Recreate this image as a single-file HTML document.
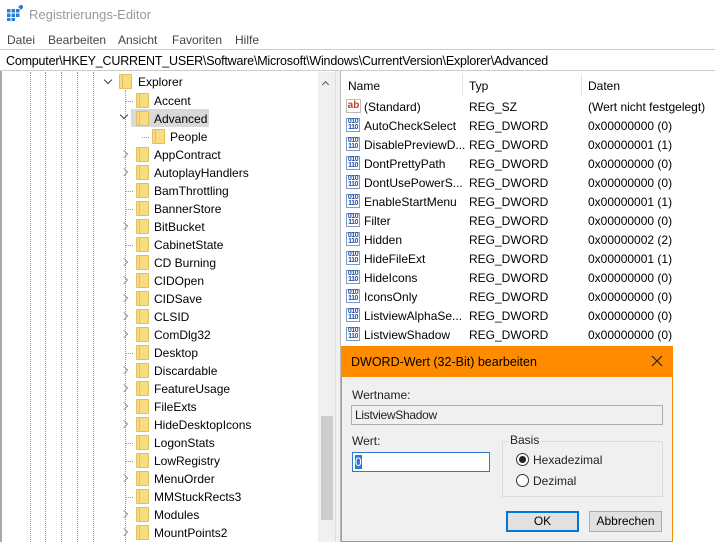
<!DOCTYPE html>
<html><head><meta charset="utf-8"><style>
*{margin:0;padding:0;box-sizing:border-box}
html,body{width:715px;height:542px;overflow:hidden}
body{background:#fff;font-family:"Liberation Sans",sans-serif;font-size:12px;color:#000;position:relative}
.a{position:absolute;white-space:nowrap}
.t{font-size:12px}
.fold{position:absolute;width:13px;height:15px;background:#f8dc82;border:1px solid #e3bf5a;border-radius:1px}
.fold:before{content:"";position:absolute;left:2px;top:-1px;width:1px;height:15px;background:#e3bf5a}
.chev{position:absolute;width:6px;height:6px;border-right:1.5px solid #999;border-bottom:1.5px solid #999;transform:rotate(-45deg)}
.dn{transform:rotate(45deg);border-color:#444}
.vl{position:absolute;top:72px;height:470px;border-left:1px dotted #999}
.hd{position:absolute;width:7px;border-top:1px dotted #999}
.ic{position:absolute;width:14px;height:14px;border:1px solid #7d9bc7;background:#fff;font-size:7px;line-height:6px;color:#1f4ea0;font-weight:bold;text-align:center;letter-spacing:-.5px}
</style></head><body>
<svg class="a" style="left:7px;top:5px" width="16" height="16"><g fill="#2a7fd4"><rect x="0" y="4" width="3.5" height="3.5"/><rect x="4.5" y="4" width="3.5" height="3.5"/><rect x="9" y="4" width="3.5" height="3.5"/><rect x="0" y="8.5" width="3.5" height="3.5"/><rect x="4.5" y="8.5" width="3.5" height="3.5"/><rect x="9" y="8.5" width="3.5" height="3.5"/><rect x="0" y="13" width="3.5" height="3"/><rect x="4.5" y="13" width="3.5" height="3"/></g><rect x="12" y="0" width="4" height="4" fill="#2a7fd4" transform="rotate(45 14 2)"/></svg>
<div class="a" style="left:29px;top:7px;font-size:13px;color:#999">Registrierungs-Editor</div>
<div class="a" style="left:7px;top:33px;color:#444">Datei</div>
<div class="a" style="left:48px;top:33px;color:#444">Bearbeiten</div>
<div class="a" style="left:118px;top:33px;color:#444">Ansicht</div>
<div class="a" style="left:172px;top:33px;color:#444">Favoriten</div>
<div class="a" style="left:235px;top:33px;color:#444">Hilfe</div>
<div class="a" style="left:0;top:49px;width:715px;height:22px;border-top:1px solid #ccc;border-bottom:1px solid #ccc"></div>
<div class="a" style="left:6px;top:54px;font-size:12.5px;letter-spacing:-.2px">Computer\HKEY_CURRENT_USER\Software\Microsoft\Windows\CurrentVersion\Explorer\Advanced</div>
<div class="a" style="left:0;top:71px;width:2px;height:471px;background:#aaa"></div>
<div class="vl" style="left:30px"></div><div class="vl" style="left:45px"></div><div class="vl" style="left:61px"></div><div class="vl" style="left:77px"></div><div class="vl" style="left:93px"></div><div class="vl" style="left:125px;top:90px"></div>
<div class="a" style="left:318px;top:72px;width:17px;height:470px;background:#f0f0f0"></div>
<div class="a" style="left:321px;top:416px;width:12px;height:104px;background:#cdcdcd"></div>
<div class="chev" style="left:323px;top:82px;transform:rotate(-135deg);border-color:#555;width:5px;height:5px"></div>
<div class="a" style="left:335px;top:71px;width:6px;height:471px;background:#f0f0f0;border-left:1px solid #ddd;border-right:1px solid #bbb"></div>
<div class="chev dn" style="left:105px;top:77px"></div><div class="fold" style="left:119px;top:74px"></div><div class="a t" style="left:138px;top:75px">Explorer</div>
<div class="a" style="left:131px;top:109px;width:78px;height:18px;background:#d9d9d9"></div>
<div id="tree"></div>
<div class="a" style="left:462px;top:74px;height:22px;border-left:1px solid #e5e5e5"></div>
<div class="a" style="left:581px;top:74px;height:22px;border-left:1px solid #e5e5e5"></div>
<div class="a t" style="left:348px;top:79px">Name</div>
<div class="a t" style="left:469px;top:79px">Typ</div>
<div class="a t" style="left:588px;top:79px">Daten</div>
<div id="list"></div>
<div class="a" style="left:341px;top:346px;width:332px;height:196px;background:#f0f0f0;border:1px solid #f28c00"></div>
<div class="a" style="left:341px;top:346px;width:332px;height:31px;background:#ff8c00"></div>
<div class="a" style="left:351px;top:355px;font-size:12.5px">DWORD-Wert (32-Bit) bearbeiten</div>
<svg class="a" style="left:651px;top:355px" width="12" height="12"><path d="M1 1L11 11M11 1L1 11" stroke="#222" stroke-width="1.2"/></svg>
<div class="a" style="left:352px;top:388px;color:#222">Wertname:</div>
<div class="a" style="left:351px;top:405px;width:312px;height:20px;background:#f0f0f0;border:1px solid #adadad"></div>
<div class="a" style="left:355px;top:408px;color:#222;letter-spacing:-.3px">ListviewShadow</div>
<div class="a" style="left:352px;top:434px;color:#222">Wert:</div>
<div class="a" style="left:352px;top:452px;width:138px;height:20px;background:#fff;border:1px solid #2d7bd1"></div>
<div class="a" style="left:355px;top:455px;width:7px;height:14px;background:#3078d7;color:#fff;line-height:14px">0</div>
<div class="a" style="left:502px;top:441px;width:161px;height:56px;border:1px solid #dcdcdc"></div>
<div class="a" style="left:508px;top:433px;background:#f0f0f0;padding:0 2px;color:#222">Basis</div>
<div class="a" style="left:516px;top:453px;width:13px;height:13px;border:1px solid #333;border-radius:50%;background:#fff"></div>
<div class="a" style="left:519px;top:456px;width:7px;height:7px;border-radius:50%;background:#222"></div>
<div class="a" style="left:533px;top:453px;color:#222">Hexadezimal</div>
<div class="a" style="left:516px;top:474px;width:13px;height:13px;border:1px solid #333;border-radius:50%;background:#fff"></div>
<div class="a" style="left:533px;top:474px;color:#222">Dezimal</div>
<div class="a" style="left:506px;top:511px;width:73px;height:21px;background:#e1e1e1;border:2px solid #0078d7;text-align:center;line-height:17px">OK</div>
<div class="a" style="left:589px;top:511px;width:73px;height:21px;background:#e1e1e1;border:1px solid #adadad;text-align:center;line-height:19px">Abbrechen</div>
<script>
var t=[["Accent",0,0],["Advanced",0,2],["People",1,0],["AppContract",0,1],["AutoplayHandlers",0,1],["BamThrottling",0,0],["BannerStore",0,0],["BitBucket",0,1],["CabinetState",0,0],["CD Burning",0,1],["CIDOpen",0,1],["CIDSave",0,1],["CLSID",0,1],["ComDlg32",0,1],["Desktop",0,0],["Discardable",0,1],["FeatureUsage",0,1],["FileExts",0,1],["HideDesktopIcons",0,1],["LogonStats",0,0],["LowRegistry",0,0],["MenuOrder",0,1],["MMStuckRects3",0,0],["Modules",0,1],["MountPoints2",0,1]];
var h="";t.forEach(function(r,i){var y=92+i*18,x=136+r[1]*16;
if(r[2]==1)h+='<div class="chev" style="left:'+(x-15)+'px;top:'+(y+5)+'px"></div>';
else if(r[2]==2)h+='<div class="chev dn" style="left:'+(x-15)+'px;top:'+(y+2)+'px"></div>';
else h+='<div class="hd" style="left:'+(x-10)+'px;top:'+(y+9)+'px"></div>';
h+='<div class="fold" style="left:'+x+'px;top:'+(y+1)+'px"></div><div class="a t" style="left:'+(x+18)+'px;top:'+(y+2)+'px">'+r[0]+'</div>';});
document.getElementById("tree").innerHTML=h;
var l=[["(Standard)","REG_SZ","(Wert nicht festgelegt)"],["AutoCheckSelect","REG_DWORD","0x00000000 (0)"],["DisablePreviewD...","REG_DWORD","0x00000001 (1)"],["DontPrettyPath","REG_DWORD","0x00000000 (0)"],["DontUsePowerS...","REG_DWORD","0x00000000 (0)"],["EnableStartMenu","REG_DWORD","0x00000001 (1)"],["Filter","REG_DWORD","0x00000000 (0)"],["Hidden","REG_DWORD","0x00000002 (2)"],["HideFileExt","REG_DWORD","0x00000001 (1)"],["HideIcons","REG_DWORD","0x00000000 (0)"],["IconsOnly","REG_DWORD","0x00000000 (0)"],["ListviewAlphaSe...","REG_DWORD","0x00000000 (0)"],["ListviewShadow","REG_DWORD","0x00000000 (0)"]];
h="";l.forEach(function(r,i){var y=98+i*19;
h+=i==0?'<div class="a" style="left:346px;top:'+(y+1)+'px;width:15px;height:14px;border:1px solid #bbb;color:#c23d1b;font-weight:bold;font-size:10px;line-height:12px;text-align:center">ab</div>':'<div class="ic" style="left:346px;top:'+(y+1)+'px">010<br>110</div>';
h+='<div class="a t" style="left:364px;top:'+(y+2)+'px">'+r[0]+'</div><div class="a t" style="left:469px;top:'+(y+2)+'px">'+r[1]+'</div><div class="a t" style="left:588px;top:'+(y+2)+'px">'+r[2]+'</div>';});
document.getElementById("list").innerHTML=h;
</script>
</body></html>
